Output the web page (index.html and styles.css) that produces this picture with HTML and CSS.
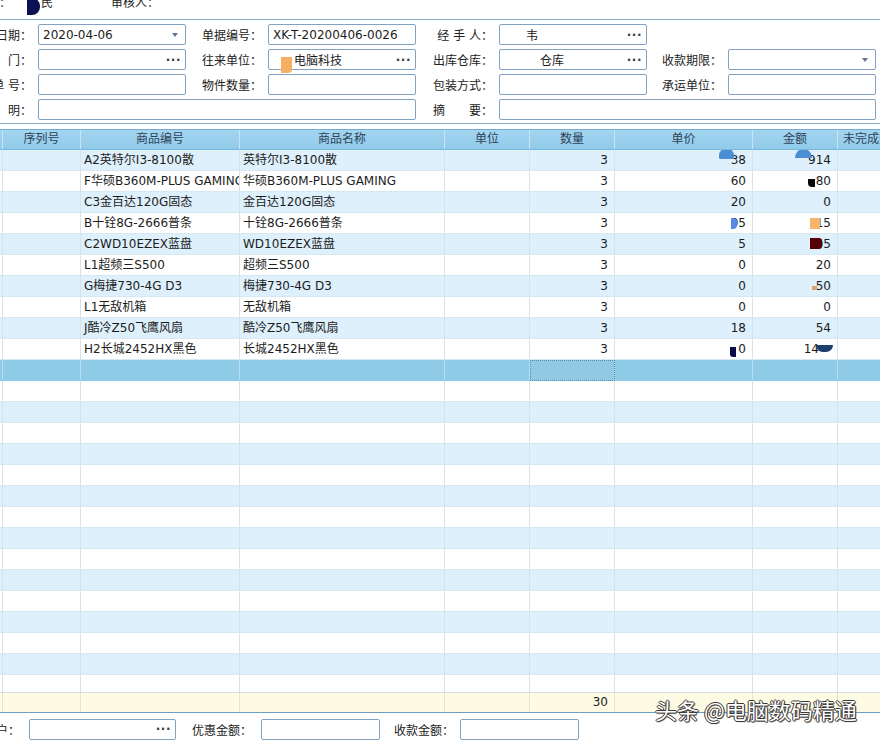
FILE: index.html
```html
<!DOCTYPE html>
<html lang="zh-CN">
<head>
<meta charset="utf-8">
<title>销售单</title>
<link rel="stylesheet" href="styles.css">
</head>
<body>
<div class="page">
  <div class="topbar">
    <span class="tlabel">制单人：</span>
    <span class="tvalue"><span class="blob-navy"></span>民</span>
    <span class="tlabel2">审核人：</span>
  </div>

  <div class="form">
    <label class="lbl l1">销售日期：</label>
    <div class="inp"><span class="val">2020-04-06</span><span class="arrow"></span></div>
    <label class="lbl">单据编号：</label>
    <div class="inp"><span class="val">XK-T-20200406-0026</span></div>
    <label class="lbl">经 手 人：</label>
    <div class="inp"><span class="mask m1"></span><span class="val">韦</span><span class="dots">···</span></div>
    <div class="empty"></div>
    <div class="empty"></div>

    <label class="lbl l1">部　　门：</label>
    <div class="inp"><span class="val"></span><span class="dots">···</span></div>
    <label class="lbl">往来单位：</label>
    <div class="inp"><span class="blob-orange"></span><span class="val">电脑科技</span><span class="dots">···</span></div>
    <label class="lbl">出库仓库：</label>
    <div class="inp"><span class="mask m2"></span><span class="val">仓库</span><span class="dots">···</span></div>
    <label class="lbl">收款期限：</label>
    <div class="inp"><span class="val"></span><span class="arrow"></span></div>

    <label class="lbl l1">单 号：</label>
    <div class="inp"></div>
    <label class="lbl">物件数量：</label>
    <div class="inp"></div>
    <label class="lbl">包装方式：</label>
    <div class="inp"></div>
    <label class="lbl">承运单位：</label>
    <div class="inp"></div>

    <label class="lbl l1">说　　明：</label>
    <div class="inp span3"></div>
    <label class="lbl">摘　　要：</label>
    <div class="inp span3"></div>
  </div>

  <div class="grid">
    <div class="row head">
      <div class="c"></div><div class="c">序列号</div><div class="c">商品编号</div><div class="c">商品名称</div><div class="c">单位</div><div class="c">数量</div><div class="c">单价</div><div class="c">金额</div><div class="c lefttxt">未完成数量</div>
    </div>
    <div class="body">
      <div class="row"><div class="c"></div><div class="c"></div><div class="c">A2英特尔I3-8100散</div><div class="c">英特尔I3-8100散</div><div class="c"></div><div class="c num">3</div><div class="c num"><span class="b b1"></span>38</div><div class="c num"><span class="b b2"></span>914</div><div class="c"></div></div>
      <div class="row"><div class="c"></div><div class="c"></div><div class="c">F华硕B360M-PLUS GAMING</div><div class="c">华硕B360M-PLUS GAMING</div><div class="c"></div><div class="c num">3</div><div class="c num">60</div><div class="c num"><span class="b b3"></span>80</div><div class="c"></div></div>
      <div class="row"><div class="c"></div><div class="c"></div><div class="c">C3金百达120G固态</div><div class="c">金百达120G固态</div><div class="c"></div><div class="c num">3</div><div class="c num">20</div><div class="c num">0</div><div class="c"></div></div>
      <div class="row"><div class="c"></div><div class="c"></div><div class="c">B十铨8G-2666普条</div><div class="c">十铨8G-2666普条</div><div class="c"></div><div class="c num">3</div><div class="c num"><span class="b b4"></span>05</div><div class="c num"><span class="b b5"></span>15</div><div class="c"></div></div>
      <div class="row"><div class="c"></div><div class="c"></div><div class="c">C2WD10EZEX蓝盘</div><div class="c">WD10EZEX蓝盘</div><div class="c"></div><div class="c num">3</div><div class="c num">5</div><div class="c num"><span class="b b6"></span>05</div><div class="c"></div></div>
      <div class="row"><div class="c"></div><div class="c"></div><div class="c">L1超频三S500</div><div class="c">超频三S500</div><div class="c"></div><div class="c num">3</div><div class="c num">0</div><div class="c num">20</div><div class="c"></div></div>
      <div class="row"><div class="c"></div><div class="c"></div><div class="c">G梅捷730-4G D3</div><div class="c">梅捷730-4G D3</div><div class="c"></div><div class="c num">3</div><div class="c num">0</div><div class="c num"><span class="b b7"></span>50</div><div class="c"></div></div>
      <div class="row"><div class="c"></div><div class="c"></div><div class="c">L1无敌机箱</div><div class="c">无敌机箱</div><div class="c"></div><div class="c num">3</div><div class="c num">0</div><div class="c num">0</div><div class="c"></div></div>
      <div class="row"><div class="c"></div><div class="c"></div><div class="c">J酷冷Z50飞鹰风扇</div><div class="c">酷冷Z50飞鹰风扇</div><div class="c"></div><div class="c num">3</div><div class="c num">18</div><div class="c num">54</div><div class="c"></div></div>
      <div class="row"><div class="c"></div><div class="c"></div><div class="c">H2长城2452HX黑色</div><div class="c">长城2452HX黑色</div><div class="c"></div><div class="c num">3</div><div class="c num"><span class="b b8"></span>0</div><div class="c num">14<span class="tail"></span></div><div class="c"></div></div>
      <div class="row sel"><div class="c"></div><div class="c"></div><div class="c"></div><div class="c"></div><div class="c"></div><div class="c focus"></div><div class="c"></div><div class="c"></div><div class="c"></div></div>
      <div class="row"><div class="c"></div><div class="c"></div><div class="c"></div><div class="c"></div><div class="c"></div><div class="c"></div><div class="c"></div><div class="c"></div><div class="c"></div></div>
      <div class="row"><div class="c"></div><div class="c"></div><div class="c"></div><div class="c"></div><div class="c"></div><div class="c"></div><div class="c"></div><div class="c"></div><div class="c"></div></div>
      <div class="row"><div class="c"></div><div class="c"></div><div class="c"></div><div class="c"></div><div class="c"></div><div class="c"></div><div class="c"></div><div class="c"></div><div class="c"></div></div>
      <div class="row"><div class="c"></div><div class="c"></div><div class="c"></div><div class="c"></div><div class="c"></div><div class="c"></div><div class="c"></div><div class="c"></div><div class="c"></div></div>
      <div class="row"><div class="c"></div><div class="c"></div><div class="c"></div><div class="c"></div><div class="c"></div><div class="c"></div><div class="c"></div><div class="c"></div><div class="c"></div></div>
      <div class="row"><div class="c"></div><div class="c"></div><div class="c"></div><div class="c"></div><div class="c"></div><div class="c"></div><div class="c"></div><div class="c"></div><div class="c"></div></div>
      <div class="row"><div class="c"></div><div class="c"></div><div class="c"></div><div class="c"></div><div class="c"></div><div class="c"></div><div class="c"></div><div class="c"></div><div class="c"></div></div>
      <div class="row"><div class="c"></div><div class="c"></div><div class="c"></div><div class="c"></div><div class="c"></div><div class="c"></div><div class="c"></div><div class="c"></div><div class="c"></div></div>
      <div class="row"><div class="c"></div><div class="c"></div><div class="c"></div><div class="c"></div><div class="c"></div><div class="c"></div><div class="c"></div><div class="c"></div><div class="c"></div></div>
      <div class="row"><div class="c"></div><div class="c"></div><div class="c"></div><div class="c"></div><div class="c"></div><div class="c"></div><div class="c"></div><div class="c"></div><div class="c"></div></div>
      <div class="row"><div class="c"></div><div class="c"></div><div class="c"></div><div class="c"></div><div class="c"></div><div class="c"></div><div class="c"></div><div class="c"></div><div class="c"></div></div>
      <div class="row"><div class="c"></div><div class="c"></div><div class="c"></div><div class="c"></div><div class="c"></div><div class="c"></div><div class="c"></div><div class="c"></div><div class="c"></div></div>
      <div class="row"><div class="c"></div><div class="c"></div><div class="c"></div><div class="c"></div><div class="c"></div><div class="c"></div><div class="c"></div><div class="c"></div><div class="c"></div></div>
      <div class="row"><div class="c"></div><div class="c"></div><div class="c"></div><div class="c"></div><div class="c"></div><div class="c"></div><div class="c"></div><div class="c"></div><div class="c"></div></div>
      <div class="row"><div class="c"></div><div class="c"></div><div class="c"></div><div class="c"></div><div class="c"></div><div class="c"></div><div class="c"></div><div class="c"></div><div class="c"></div></div>
    </div>
    <div class="row sum">
      <div class="c"></div><div class="c"></div><div class="c"></div><div class="c"></div><div class="c"></div><div class="c num">30</div><div class="c"></div><div class="c"></div><div class="c"></div>
    </div>
  </div>

  <div class="foot">
    <label class="lbl f1">收款账户：</label>
    <div class="inp w147"><span class="val"></span><span class="dots">···</span></div>
    <label class="lbl f2">优惠金额：</label>
    <div class="inp w119"></div>
    <label class="lbl f3">收款金额：</label>
    <div class="inp w119"></div>
  </div>

  <div class="watermark">头条 @电脑数码精通</div>
</div>
</body>
</html>
```

FILE: styles.css
```css
* { box-sizing: border-box; }
html, body { margin: 0; padding: 0; }
body {
  width: 880px;
  height: 742px;
  overflow: hidden;
  background: #ffffff;
  font-family: "DejaVu Sans", "Noto Sans CJK SC", sans-serif;
  font-size: 12px;
  color: #1c1c1c;
}
.page { position: relative; width: 880px; height: 742px; overflow: hidden; }

/* top bar */
.topbar {
  height: 20px;
  display: flex;
  align-items: flex-start;
  border-bottom: 1px solid #86abc9;
  line-height: 12px;
}
.topbar > span { margin-top: -3px; white-space: nowrap; }
.tlabel { width: 11px; display: flex; justify-content: flex-end; }
.tvalue { margin-left: 16px; display: flex; align-items: flex-start; }
.blob-navy {
  display: inline-block;
  width: 13px; height: 17px;
  margin-top: 1px;
  background: #0b1152;
  border-radius: 0 8px 8px 0;
  margin-right: 1px;
}
.tlabel2 { margin-left: 58px; }

/* form */
.form {
  display: grid;
  grid-template-columns: 32px 148px 70px 148px 71px 148px 69px 148px;
  grid-auto-rows: 21px;
  column-gap: 6px;
  row-gap: 4px;
  padding: 4px 0 3px 0;
  border-bottom: 1px solid #86abc9;
}
.lbl {
  display: flex;
  justify-content: flex-end;
  align-items: center;
  white-space: nowrap;
  color: #222;
}
.inp {
  position: relative;
  display: flex;
  align-items: center;
  border: 1px solid #82a2c2;
  border-radius: 2px;
  background: #fff;
  padding: 0 4px 0 4px;
  white-space: nowrap;
}
.inp .val { flex: 1; }
.span3 { grid-column: span 3; }
.dots {
  color: #3c3c3c;
  font-size: 12px;
  font-weight: bold;
  letter-spacing: 0.5px;
  margin-right: 0;
  line-height: 12px;
}
.arrow {
  width: 0; height: 0;
  border-left: 3.5px solid transparent;
  border-right: 3.5px solid transparent;
  border-top: 4px solid #5f7590;
  margin-right: 3px;
}
.mask { display: inline-block; height: 19px; background: #fff; }
.m1 { width: 22px; }
.m2 { width: 36px; }
.blob-orange {
  display: inline-block;
  width: 11px; height: 16px;
  margin-left: 8px; margin-right: 2px; margin-top: 10px;
  background: #f6ae62;
  border-radius: 0 0 4px 0;
}

/* grid */
.grid { margin-top: 5px; }
.row {
  display: grid;
  grid-template-columns: 3px 78px 159px 205px 85px 85px 138px 85px 100px;
  width: 938px;
  height: 21px;
}
.c {
  position: relative;
  border-right: 1px solid #d3e4ef;
  border-bottom: 1px solid #d7e8f3;
  padding: 0 3px;
  line-height: 20px;
  white-space: nowrap;
  overflow: hidden;
  min-width: 0;
}
.c:first-child { padding: 0; }
.num { text-align: right; padding-right: 6px; }
.head {
  height: 21px;
  border-top: 1px solid #74abd2;
  background: linear-gradient(#a4d5f0, #8fcaea);
}
.head .c {
  text-align: center;
  color: #2e4358;
  border-right: 1px solid #c9e4f5;
  border-bottom: 1px solid #7ab6dc;
  line-height: 19px;
}
.head .lefttxt { text-align: left; padding-left: 5px; overflow: visible; }
.body { height: 542px; overflow: hidden; }
.body .row:nth-child(odd) { background: #def0fb; }
.body .row:nth-child(even) { background: #ffffff; }
.body .row.sel { background: #8ecbe7; }
.sel .c { border-bottom-color: #8ecbe7; border-right-color: #b8dcef; }
.sel .focus { outline: 1px dotted #4f8fb0; outline-offset: -1px; background: #92c8e2; }

.sum {
  height: 21px;
  background: #fefbe5;
  border-top: 1px solid #d8dde2;
  border-bottom: 1px solid #6d9fc4;
}
.sum .c { border-bottom: none; border-right-color: #e6e4d2; line-height: 19px; }

/* blobs over redacted numbers */
.b { position: absolute; display: block; }
.b1 { left: 104px; top: -2px; width: 15px; height: 11px; background: #4a8fd5; border-radius: 8px 8px 0 2px; }
.b2 { left: 42px; top: -1px; width: 17px; height: 9px; background: #4a8fd5; border-radius: 9px 9px 0 0; }
.b3 { left: 55px; top: 8px; width: 7px; height: 8px; background: #0a0a0a; border-radius: 0 0 0 4px; }
.b4 { left: 116px; top: 5px; width: 6px; height: 11px; background: #5a88e6; border-radius: 0 4px 4px 0; }
.b5 { left: 57px; top: 5px; width: 10px; height: 11px; background: #f7b36a; }
.b6 { left: 57px; top: 4px; width: 12px; height: 11px; background: #560006; border-radius: 0 3px 3px 0; }
.b7 { left: 59px; top: 10px; width: 5px; height: 4px; background: #e5a15e; }
.b8 { left: 115px; top: 8px; width: 6px; height: 10px; background: #0b0b4c; border-radius: 0 0 0 3px; }
.tail {
  display: inline-block;
  width: 17px; height: 7px;
  margin-left: -3px;
  margin-right: -2px;
  background: #1c3e6b;
  border-radius: 0 0 9px 9px;
  vertical-align: 1px;
}

/* footer form */
.foot {
  display: flex;
  align-items: center;
  height: 28px;
  padding-top: 4px;
}
.foot .inp { height: 21px; }
.f1 { width: 20px; margin-right: 9px; }
.w147 { width: 147px; }
.w119 { width: 119px; }
.f2 { margin-left: 16px; margin-right: 9px; }
.f3 { margin-left: 14px; margin-right: 6px; }

.watermark {
  position: absolute;
  left: 655px;
  top: 693px;
  font-family: "Noto Sans CJK SC", sans-serif;
  font-size: 22px;
  line-height: 32px;
  color: #ffffff;
  white-space: nowrap;
  text-shadow: 1px 0 0 #3a3a3a, -1px 0 0 #3a3a3a, 0 1px 0 #3a3a3a, 0 -1px 0 #3a3a3a, 1px 1px 1px #555;
}
```
